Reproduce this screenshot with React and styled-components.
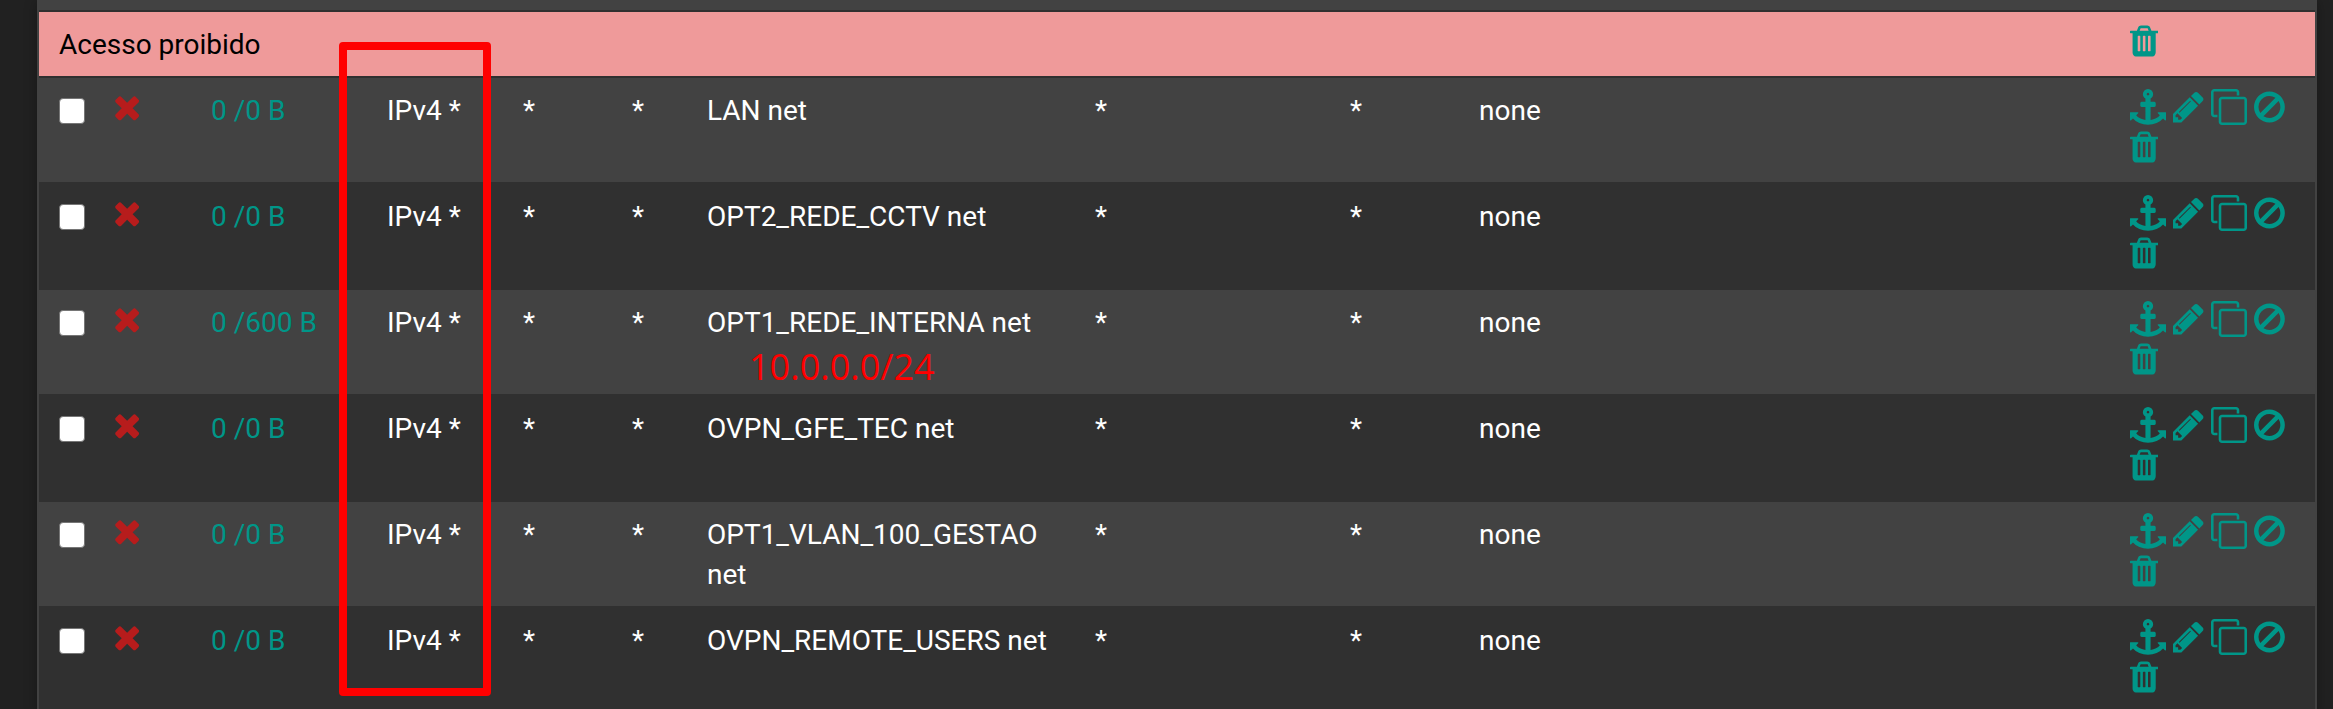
/*Imports*/
import React, { useState } from "react";
import styled, { createGlobalStyle } from "styled-components";

const GlobalStyle = createGlobalStyle`
* {
    box-sizing: border-box;
}
html {
    overflow: hidden;
}
body {
    margin: 0;
    background-color: #212121;
    color: #ffffff;
    font-family: Roboto, "Liberation Sans", sans-serif;
    font-size: 28px;
    line-height: 40px;
}
`

const Page = styled.div`
    padding: 0 16px 0 37px;
`

const Panel = styled.main`
    position: relative;
    min-height: 100vh;
    padding: 10px 2px 0;
    background-color: #424242;
    box-shadow: 0 2px 12px rgba(0, 0, 0, 0.3);
`

const RuleTable = styled.table`
    width: 100%;
    table-layout: fixed;
    border-collapse: separate;
    border-spacing: 0;
`

const Col = styled.col`
    width: ${props => props.$width};
`

const Row = styled.tr`
    background-color: #424242;

    &:nth-child(odd) {
        background-color: #303030;
    }
`

const SeparatorRow = styled.tr`
    background-color: #ef9a9a;
    color: #000000;
`

const Cell = styled.td`
    position: relative;
    padding: 13px 12px 11px;
    border-top: 2px solid #303030;
    vertical-align: top;
    text-align: left;
    font-weight: 400;

    &:first-child {
        padding-left: 20px;
    }
`

const IconCell = styled(Cell)`
    padding-top: 11px;
    padding-bottom: 17px;
`

const Check = styled.input`
    display: block;
    appearance: none;
    width: 26px;
    height: 26px;
    margin: 7px 0 0;
    border: 1px solid #767676;
    border-radius: 4px;
    background-color: #ffffff;

    &:checked {
        background-color: #009688;
    }
`

const Glyph = styled.svg`
    display: block;
    height: 36px;
    fill: currentColor;
`

const Blocked = styled.span`
    display: block;
    color: #b71c1c;
`

const States = styled.a`
    color: #009688;
    text-decoration: none;
`

const Actions = styled.div`
    display: flex;
    flex-wrap: wrap;
    gap: 4px 7px;
`

const ActionLink = styled.a`
    color: #009688;
`

const ActionButton = styled.button`
    padding: 0;
    border: 0;
    background: none;
    color: #009688;
    cursor: pointer;
`

/*Drawn over the table*/
const Highlight = styled.div`
    position: absolute;
    top: 42px;
    left: 302px;
    width: 152px;
    height: 654px;
    border: 8px solid #ff0000;
    border-radius: 4px;
    pointer-events: none;
`

const Note = styled.span`
    position: absolute;
    top: 57px;
    left: 54px;
    color: #ff0000;
    font-family: "Open Sans", "Noto Sans", sans-serif;
    font-size: 36px;
    line-height: 40px;
`

const icons = {
    anchor: {
        box: '0 0 1792 1792',
        path: 'M960 256q0-26-19-45t-45-19-45 19-19 45 19 45 45 19 45-19 19-45zm832 928v352q0 22-20 30-8 2-12 2-13 0-23-9l-93-93q-119 143-318.500 226.500t-429.500 83.500-429.500-83.500-318.500-226.500l-93 93q-9 9-23 9-4 0-12-2-20-8-20-30v-352q0-14 9-23t23-9h352q22 0 30 20 8 19-7 35l-100 100q67 91 189.500 153.500t271.500 82.500v-647h-192q-26 0-45-19t-19-45v-128q0-26 19-45t45-19h192v-163q-58-34-93-92.500t-35-128.500q0-106 75-181t181-75 181 75 75 181q0 70-35 128.500t-93 92.500v163h192q26 0 45 19t19 45v128q0 26-19 45t-45 19h-192v647q149-20 271.500-82.500t189.500-153.500l-100-100q-15-16-7-35 8-20 30-20h352q14 0 23 9t9 23z'
    },
    pencil: {
        box: '128 0 1536 1792',
        path: 'M491 1536l91-91-235-235-91 91v107h128v128h107zm523-928q0-22-22-22-10 0-17 7l-542 542q-7 7-7 17 0 22 22 22 10 0 17-7l542-542q7-7 7-17zm-54-192l416 416-832 832h-416v-416zm683 96q0 53-37 90l-166 166-416-416 166-165q36-38 90-38 53 0 91 38l235 234q37 39 37 91z'
    },
    clone: {
        box: '0 0 1792 1792',
        path: 'M1664 1632v-1088q0-13-9.500-22.500t-22.500-9.500h-1088q-13 0-22.500 9.500t-9.500 22.500v1088q0 13 9.500 22.500t22.500 9.500h1088q13 0 22.500-9.500t9.500-22.500zm128-1088v1088q0 66-47 113t-113 47h-1088q-66 0-113-47t-47-113v-1088q0-66 47-113t113-47h1088q66 0 113 47t47 113zm-384-384v160h-128v-160q0-13-9.500-22.500t-22.500-9.500h-1088q-13 0-22.500 9.500t-9.500 22.500v1088q0 13 9.500 22.500t22.500 9.500h160v128h-160q-66 0-113-47t-47-113v-1088q0-66 47-113t113-47h1088q66 0 113 47t47 113z'
    },
    ban: {
        box: '128 0 1536 1792',
        path: 'M1440 893q0-161-87-295l-754 753q137 89 297 89 111 0 211.500-43.500t173.500-116.500 116-174.500 43-212.500zm-999 299l755-754q-135-91-300-91-148 0-273 73t-198 199-73 274q0 162 89 299zm1223-299q0 157-61 300t-163.500 246-245 164-298.500 61-298.500-61-245-164-163.500-246-61-300 61-299.500 163.500-245.500 245-164 298.500-61 298.500 61 245 164 163.500 245.500 61 299.500z'
    },
    trash: {
        box: '192 0 1408 1792',
        path: 'M704 1376v-704q0-14-9-23t-23-9h-64q-14 0-23 9t-9 23v704q0 14 9 23t23 9h64q14 0 23-9t9-23zm256 0v-704q0-14-9-23t-23-9h-64q-14 0-23 9t-9 23v704q0 14 9 23t23 9h64q14 0 23-9t9-23zm256 0v-704q0-14-9-23t-23-9h-64q-14 0-23 9t-9 23v704q0 14 9 23t23 9h64q14 0 23-9t9-23zm-544-992h448l-48-117q-7-9-17-11h-317q-10 2-17 11zm928 32v64q0 14-9 23t-23 9h-96v948q0 83-47 143.500t-113 60.500h-832q-66 0-113-58.500t-47-141.500v-952h-96q-14 0-23-9t-9-23v-64q0-14 9-23t23-9h309l70-167q15-37 54-63t79-26h320q40 0 79 26t54 63l70 167h309q14 0 23 9t9 23z'
    },
    times: {
        box: '192 0 1408 1792',
        path: 'M1490 1322q0 40-28 68l-136 136q-28 28-68 28t-68-28l-294-294-294 294q-28 28-68 28t-68-28l-136-136q-28-28-28-68t28-68l294-294-294-294q-28-28-28-68t28-68l136-136q28-28 68-28t68 28l294 294 294-294q28-28 68-28t68 28l136 136q28 28 28 68t-28 68l-294 294 294 294q28 28 28 68z'
    }
}

const columns = ['62px', '98px', '176px', '136px', '109px', '75px', '388px', '255px', '129px', '128px', '160px', 'auto', '197px']

const initialRules = [
    { id: 1, states: '0 /0 B', destination: 'LAN net', checked: false },
    { id: 2, states: '0 /0 B', destination: 'OPT2_REDE_CCTV net', checked: false },
    { id: 3, states: '0 /600 B', destination: 'OPT1_REDE_INTERNA net', note: '10.0.0.0/24', checked: false },
    { id: 4, states: '0 /0 B', destination: 'OVPN_GFE_TEC net', checked: false },
    { id: 5, states: '0 /0 B', destination: 'OPT1_VLAN_100_GESTAO net', checked: false },
    { id: 6, states: '0 /0 B', destination: 'OVPN_REMOTE_USERS net', checked: false }
]

function Icon({ name }) {
    return (
        <Glyph viewBox={icons[name].box} aria-hidden='true'>
            <path d={icons[name].path} />
        </Glyph>
    )
}

function Rule({ rule, onToggle }) {
    return (
        <Row>
            <Cell>
                <Check
                    type='checkbox'
                    aria-label={rule.destination}
                    checked={rule.checked}
                    onChange={() => onToggle(rule.id)}
                />
            </Cell>
            <IconCell>
                <Blocked><Icon name='times' /></Blocked>
            </IconCell>
            <Cell><States href='#states'>{rule.states}</States></Cell>
            <Cell>IPv4 *</Cell>
            <Cell>*</Cell>
            <Cell>*</Cell>
            <Cell>
                {rule.destination}
                {rule.note && <Note>{rule.note}</Note>}
            </Cell>
            <Cell>*</Cell>
            <Cell>*</Cell>
            <Cell>none</Cell>
            <Cell />
            <Cell />
            <IconCell>
                <Actions>
                    <ActionButton type='button' aria-label='Move'><Icon name='anchor' /></ActionButton>
                    <ActionLink href='#edit' aria-label='Edit'><Icon name='pencil' /></ActionLink>
                    <ActionLink href='#copy' aria-label='Copy'><Icon name='clone' /></ActionLink>
                    <ActionButton type='button' aria-label='Disable'><Icon name='ban' /></ActionButton>
                    <ActionButton type='button' aria-label='Delete'><Icon name='trash' /></ActionButton>
                </Actions>
            </IconCell>
        </Row>
    )
}

/*Rules page*/
export default function App() {

    const [ rules, setRules ] = useState(initialRules)

    function onToggle(id) {
        setRules(rules.map(rule => rule.id === id ? {...rule, checked: !rule.checked} : rule))
    }

    return (
        <Page>
            <GlobalStyle />
            <Panel>
                <RuleTable>
                    <colgroup>
                        {columns.map((width, index) => <Col key={index} $width={width} />)}
                    </colgroup>
                    <tbody>
                        <SeparatorRow>
                            <Cell as='th' scope='rowgroup' colSpan={12}>Acesso proibido</Cell>
                            <IconCell>
                                <Actions>
                                    <ActionButton type='button' aria-label='Delete separator'><Icon name='trash' /></ActionButton>
                                </Actions>
                            </IconCell>
                        </SeparatorRow>
                        {rules.map(rule => <Rule key={rule.id} rule={rule} onToggle={onToggle} />)}
                    </tbody>
                </RuleTable>
                <Highlight />
            </Panel>
        </Page>
    )
}
